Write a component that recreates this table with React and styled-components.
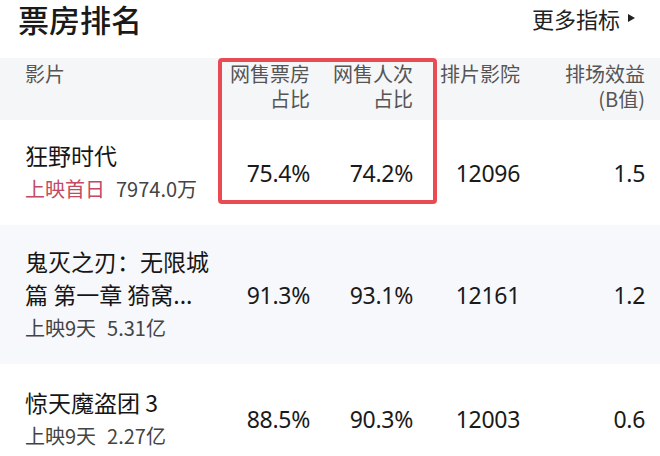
import React from 'react';
import styled, { createGlobalStyle } from 'styled-components';

const GlobalStyle = createGlobalStyle`
  html, body {
    margin: 0;
    padding: 0;
    background: #fff;
  }
  body {
    width: 660px;
    height: 456px;
    overflow: hidden;
    font-family: "Noto Sans CJK SC", "Noto Sans", sans-serif;
  }
`;

const movies = [
  {
    name: ['狂野时代'],
    tag: '上映首日',
    hot: true,
    total: '7974.0万',
    boxShare: '75.4%',
    viewShare: '74.2%',
    cinemas: '12096',
    bValue: '1.5',
    height: 105,
    tint: false,
  },
  {
    name: ['鬼灭之刃：无限城', '篇 第一章 猗窝...'],
    tag: '上映9天',
    hot: false,
    total: '5.31亿',
    boxShare: '91.3%',
    viewShare: '93.1%',
    cinemas: '12161',
    bValue: '1.2',
    height: 139,
    tint: true,
  },
  {
    name: ['惊天魔盗团 3'],
    tag: '上映9天',
    hot: false,
    total: '2.27亿',
    boxShare: '88.5%',
    viewShare: '90.3%',
    cinemas: '12003',
    bValue: '0.6',
    height: 110,
    tint: false,
  },
];

export default function App() {
  return (
    <>
      <GlobalStyle />
      <Page>
        <TopBar>
          <Title>票房排名</Title>
          <MoreLink>
            更多指标
            <Caret />
          </MoreLink>
        </TopBar>

        <Table>
          <Highlight />
          <HeaderRow>
            <HeadCell align="left">影片</HeadCell>
            <HeadCell>
              网售票房
              <br />
              占比
            </HeadCell>
            <HeadCell>
              网售人次
              <br />
              占比
            </HeadCell>
            <HeadCell>排片影院</HeadCell>
            <HeadCell last>
              排场效益
              <br />
              (B值)
            </HeadCell>
          </HeaderRow>

          {movies.map((m) => (
            <Row key={m.name[0]} tint={m.tint} style={{ height: m.height }}>
              <FilmCell>
                {m.name.map((line) => (
                  <FilmName key={line}>{line}</FilmName>
                ))}
                <FilmMeta>
                  <MetaTag hot={m.hot}>{m.tag}</MetaTag>
                  {m.total}
                </FilmMeta>
              </FilmCell>
              <NumCell>{m.boxShare}</NumCell>
              <NumCell>{m.viewShare}</NumCell>
              <NumCell>{m.cinemas}</NumCell>
              <NumCell last>{m.bValue}</NumCell>
            </Row>
          ))}
        </Table>
      </Page>
    </>
  );
}

const Page = styled.div`
  width: 660px;
  height: 456px;
  overflow: hidden;
  background: #fff;
  color: #1c1c1c;
`;

const TopBar = styled.div`
  height: 58px;
  display: flex;
  align-items: flex-start;
  justify-content: space-between;
  padding: 0 25px 0 18px;
  box-sizing: border-box;
`;

const Title = styled.h1`
  margin: 0;
  font-size: 31px;
  font-weight: 500;
  line-height: 38px;
  color: #1a1a1a;
`;

const MoreLink = styled.div`
  display: flex;
  align-items: center;
  gap: 8px;
  margin-top: 2px;
  font-size: 22px;
  line-height: 32px;
  color: #222;
`;

const Caret = styled.span`
  width: 0;
  height: 0;
  border-top: 4.5px solid transparent;
  border-bottom: 4.5px solid transparent;
  border-left: 7px solid #222;
`;

const Table = styled.div`
  position: relative;
`;

const Highlight = styled.div`
  position: absolute;
  left: 218px;
  top: 0;
  width: 219px;
  height: 146px;
  box-sizing: border-box;
  border: 4px solid #ea4b52;
  border-radius: 4px;
  pointer-events: none;
  z-index: 1;
`;

const columns = '220px 100px 103px 107px 1fr';

const HeaderRow = styled.div`
  display: grid;
  grid-template-columns: ${columns};
  height: 62px;
  background: #f5f6f8;
  box-sizing: border-box;
  padding-top: 3px;
`;

const HeadCell = styled.div`
  font-size: 20px;
  line-height: 25px;
  color: #555;
  text-align: ${(p) => p.align || 'right'};
  padding-left: ${(p) => (p.align === 'left' ? '25px' : '0')};
  padding-right: ${(p) => (p.last ? '15px' : '10px')};
`;

const Row = styled.div`
  display: grid;
  grid-template-columns: ${columns};
  align-items: center;
  background: ${(p) => (p.tint ? '#f7f8fb' : '#fff')};
`;

const FilmCell = styled.div`
  padding-left: 25px;
  padding-right: 4px;
`;

const FilmName = styled.div`
  font-size: 23px;
  line-height: 33px;
  color: #161616;
  white-space: nowrap;
`;

const FilmMeta = styled.div`
  font-size: 20px;
  line-height: 34px;
  color: #444;
  display: flex;
  gap: 11px;
`;

const MetaTag = styled.span`
  color: ${(p) => (p.hot ? '#c44a64' : '#444')};
`;

const NumCell = styled.div`
  font-family: "Noto Sans", "DejaVu Sans", sans-serif;
  font-size: 23px;
  color: #1a1a1a;
  text-align: right;
  padding-right: ${(p) => (p.last ? '15px' : '10px')};
  letter-spacing: -0.3px;
`;
